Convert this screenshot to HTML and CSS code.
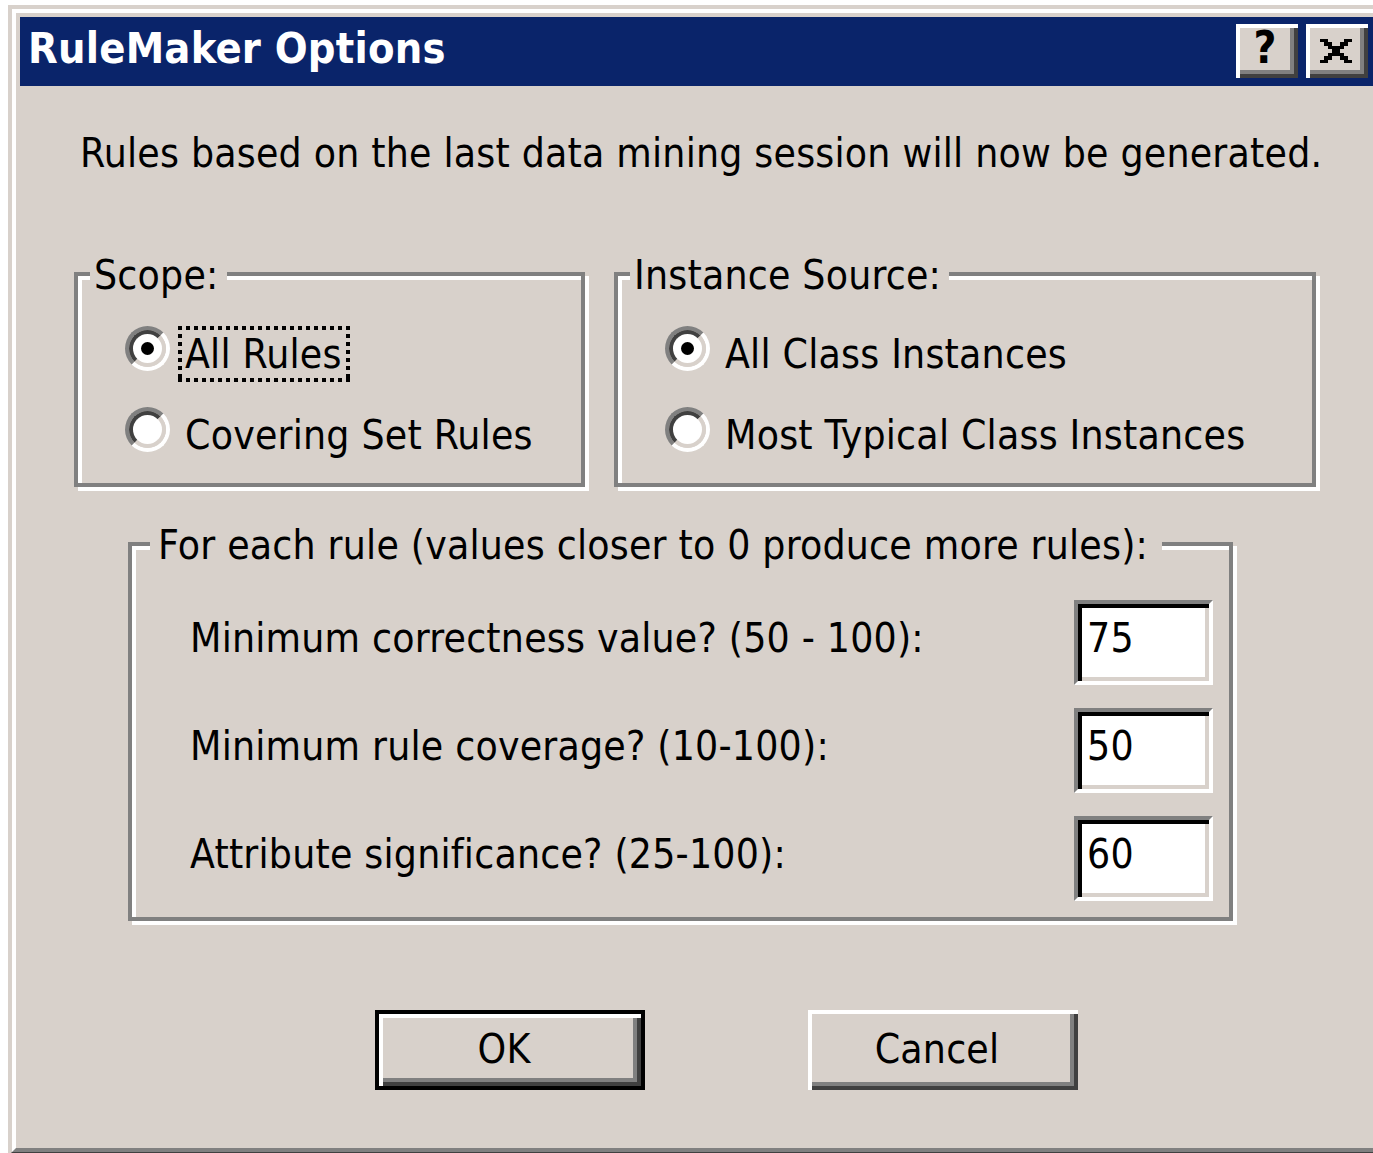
FILE: index.html
```html
<!DOCTYPE html>
<html lang="en">
<head>
<meta charset="utf-8">
<title>RuleMaker Options</title>
<link rel="stylesheet" href="styles.css">
</head>
<body>
<div class="window">
  <div class="frame">
    <div class="titlebar">
      <span class="title">RuleMaker Options</span>
      <div class="caption-buttons">
        <div class="caption-btn"><span class="help-glyph">?</span></div>
        <div class="caption-btn">
          <svg class="close-glyph" viewBox="0 0 8 7" preserveAspectRatio="none" shape-rendering="crispEdges">
            <rect x="0" y="0" width="2" height="1"/><rect x="6" y="0" width="2" height="1"/>
            <rect x="1" y="1" width="2" height="1"/><rect x="5" y="1" width="2" height="1"/>
            <rect x="2" y="2" width="4" height="1"/>
            <rect x="3" y="3" width="2" height="1"/>
            <rect x="2" y="4" width="4" height="1"/>
            <rect x="1" y="5" width="2" height="1"/><rect x="5" y="5" width="2" height="1"/>
            <rect x="0" y="6" width="2" height="1"/><rect x="6" y="6" width="2" height="1"/>
          </svg>
        </div>
      </div>
    </div>

    <div class="dialog-body">
      <p class="intro">Rules based on the last data mining session will now be generated.</p>

      <div class="groups">
        <div class="group group-scope">
          <span class="legend">Scope:</span>
          <div class="option">
            <span class="radio checked"></span>
            <span class="option-label focused">All Rules</span>
          </div>
          <div class="option">
            <span class="radio"></span>
            <span class="option-label">Covering Set Rules</span>
          </div>
        </div>

        <div class="group group-source">
          <span class="legend">Instance Source:</span>
          <div class="option">
            <span class="radio checked"></span>
            <span class="option-label">All Class Instances</span>
          </div>
          <div class="option">
            <span class="radio"></span>
            <span class="option-label">Most Typical Class Instances</span>
          </div>
        </div>
      </div>

      <div class="group group-params">
        <span class="legend legend-params">For each rule (values closer to 0 produce more rules):</span>
        <div class="param-row">
          <span class="param-label">Minimum correctness value? (50 - 100):</span>
          <div class="edit">75</div>
        </div>
        <div class="param-row">
          <span class="param-label">Minimum rule coverage? (10-100):</span>
          <div class="edit">50</div>
        </div>
        <div class="param-row">
          <span class="param-label">Attribute significance? (25-100):</span>
          <div class="edit">60</div>
        </div>
      </div>

      <div class="actions">
        <div class="push-btn push-btn-default">OK</div>
        <div class="push-btn">Cancel</div>
      </div>
    </div>
  </div>
</div>
</body>
</html>
```

FILE: styles.css
```css
/* Classic 3D dialog palette */
:root {
  --face: #d8d1cb;
  --shadow: #808080;
  --dark: #404040;
  --hilite: #ffffff;
  --caption: #0a246a;
}

html, body {
  margin: 0;
  padding: 0;
  background: #ffffff;
  overflow: hidden;
}

body {
  font-family: "DejaVu Sans Condensed", "DejaVu Sans", sans-serif;
  font-stretch: semi-condensed;
  font-size: 40.5px;
  line-height: 48px;
  letter-spacing: 0.2px;
  color: #000;
}

/* Window frame: outer and inner bevel */
.window {
  box-sizing: border-box;
  margin: 5px 0 0 8px;
  width: 1377px;
  height: 1151px;
  border: 4px solid;
  border-color: var(--face) var(--dark) var(--dark) var(--face);
  background: var(--face);
}

.frame {
  box-sizing: border-box;
  height: 100%;
  border: 4px solid;
  border-color: var(--hilite) var(--shadow) var(--shadow) var(--hilite);
  padding: 4px;
  display: flex;
  flex-direction: column;
}

/* Caption bar */
.titlebar {
  flex: none;
  height: 69px;
  background: var(--caption);
  display: flex;
  align-items: flex-start;
  justify-content: space-between;
  padding: 0 5px 0 8px;
}

.title {
  margin-top: 7px;
  color: #fff;
  font-weight: bold;
  font-size: 43px;
  line-height: 48px;
  letter-spacing: 0.2px;
}

.caption-buttons {
  display: flex;
  gap: 8px;
  margin-top: 7px;
}

.caption-btn {
  box-sizing: border-box;
  width: 62px;
  height: 54px;
  background: var(--face);
  box-shadow: inset 4px 4px 0 var(--hilite), inset -4px -4px 0 var(--dark), inset -8px -8px 0 var(--shadow);
  display: flex;
  align-items: center;
  justify-content: center;
}

.help-glyph {
  font-family: "DejaVu Sans", sans-serif;
  font-weight: bold;
  font-size: 44px;
  line-height: 44px;
  margin: -6px 4px 0 0;
}

.close-glyph {
  width: 32px;
  height: 24px;
  fill: #000;
  margin-right: 2px;
}

/* Dialog content */
.dialog-body {
  flex: 1;
  display: flex;
  flex-direction: column;
  align-items: flex-start;
}

.intro {
  margin: 43px 0 0 60px;
}

.groups {
  display: flex;
  gap: 29px;
  margin: 95px 0 0 54px;
}

/* Etched group box */
.group {
  position: relative;
  box-sizing: border-box;
  border: 4px solid var(--shadow);
  box-shadow: inset 4px 4px 0 var(--hilite), 4px 4px 0 var(--hilite);
}

.legend {
  position: absolute;
  top: -25px;
  left: 12px;
  padding: 0 8px 0 4px;
  background: var(--face);
  white-space: nowrap;
}

.legend-params {
  left: 18px;
  padding: 0 14px 0 8px;
}

.group-scope,
.group-source {
  height: 215px;
  padding: 50px 0 0 47px;
  display: flex;
  flex-direction: column;
  gap: 25px;
}

.group-scope { width: 511px; }
.group-source { width: 702px; }

.option {
  display: flex;
  align-items: flex-start;
  gap: 8px;
}

/* Radio button */
.radio {
  position: relative;
  flex: none;
  box-sizing: border-box;
  width: 45px;
  height: 45px;
  border-radius: 50%;
  border: 4px solid;
  border-color: var(--shadow) var(--hilite) var(--hilite) var(--shadow);
}

.radio::before {
  content: "";
  position: absolute;
  inset: 0;
  border-radius: 50%;
  border: 4px solid;
  border-color: var(--dark) var(--face) var(--face) var(--dark);
  background: #fff;
}

.radio.checked::after {
  content: "";
  position: absolute;
  left: 12px;
  top: 12px;
  width: 13px;
  height: 13px;
  border-radius: 50%;
  background: #000;
}

.option-label {
  padding: 4px 8px 4px 7px;
  white-space: nowrap;
}

/* Dotted focus rectangle */
.option-label.focused {
  background:
    repeating-linear-gradient(90deg, #000 0 4px, transparent 4px 8px) left top / 100% 4px no-repeat,
    repeating-linear-gradient(90deg, #000 0 4px, transparent 4px 8px) left bottom / 100% 4px no-repeat,
    repeating-linear-gradient(180deg, #000 0 4px, transparent 4px 8px) left top / 4px 100% no-repeat,
    repeating-linear-gradient(180deg, #000 0 4px, transparent 4px 8px) right top / 4px 100% no-repeat;
}

.group-params {
  width: 1105px;
  margin: 55px 0 0 108px;
  padding: 54px 16px 16px 58px;
  display: flex;
  flex-direction: column;
  gap: 23px;
}

.param-row {
  display: flex;
  justify-content: space-between;
  align-items: flex-start;
}

.param-label {
  margin-top: 14px;
  white-space: nowrap;
}

/* Sunken edit field */
.edit {
  box-sizing: border-box;
  width: 139px;
  height: 85px;
  border: 4px solid;
  border-color: var(--shadow) var(--hilite) var(--hilite) var(--shadow);
  box-shadow: inset 4px 4px 0 #000, inset -4px -4px 0 var(--face);
  background: #fff;
  padding: 10px 0 0 9px;
}

.actions {
  display: flex;
  gap: 163px;
  margin: 89px 0 0 355px;
}

.push-btn {
  box-sizing: border-box;
  width: 270px;
  height: 80px;
  display: flex;
  align-items: center;
  justify-content: center;
  padding: 0 12px 3px 0;
  background: var(--face);
  box-shadow: inset 4px 4px 0 var(--hilite), inset -4px -4px 0 var(--dark), inset -8px -8px 0 var(--shadow);
}

.push-btn-default {
  border: 4px solid #000;
}
```
